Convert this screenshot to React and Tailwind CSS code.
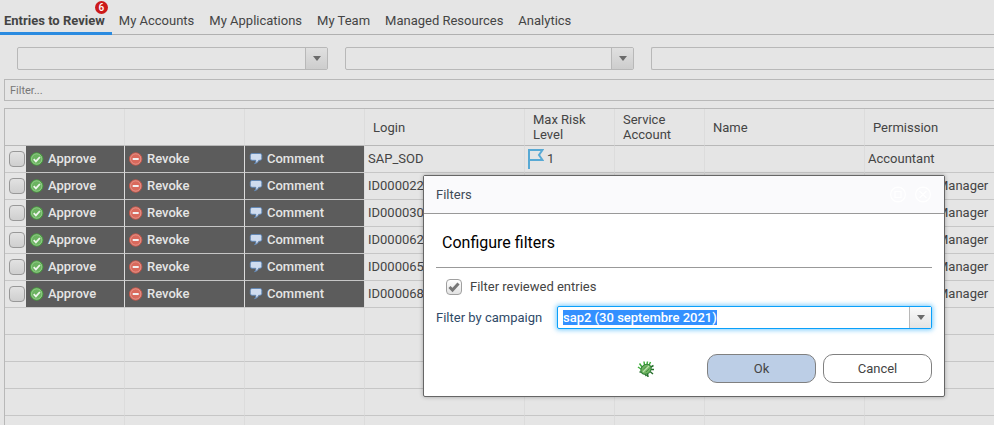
import { useEffect, useRef } from "react";

const tabs = ["My Accounts", "My Applications", "My Team", "Managed Resources", "Analytics"];

const entries = [
  { login: "SAP_SOD", risk: "1", permission: "Accountant" },
  { login: "ID000022", permission: "Accounting Manager" },
  { login: "ID000030", permission: "Accounting Manager" },
  { login: "ID000062", permission: "Accounting Manager" },
  { login: "ID000065", permission: "Accounting Manager" },
  { login: "ID000068", permission: "Accounting Manager" },
];

const columns = ["approve", "revoke", "comment", "login", "risk", "service", "name", "permission"];
const emptyRows = [0, 1, 2, 3, 4];

function ApproveIcon() {
  return (
    <svg className="size-3.5 shrink-0" viewBox="0 0 14 14" aria-hidden="true">
      <circle cx="6.700" cy="7" r="6.200" fill="#6bb360" stroke="#459a3c" />
      <circle cx="6.700" cy="7" r="5.200" fill="none" stroke="#a4d49c" strokeWidth=".7" />
      <path d="M3.700 7.200l2.200 2.200L9.900 5" fill="none" stroke="#eef5ec" strokeWidth="1.800" />
    </svg>
  );
}

function RevokeIcon() {
  return (
    <svg className="size-3.5 shrink-0" viewBox="0 0 14 14" aria-hidden="true">
      <circle cx="6.700" cy="7" r="6.200" fill="#d9695c" stroke="#c2574b" />
      <circle cx="6.700" cy="7" r="5.200" fill="none" stroke="#e9a79f" strokeWidth=".7" />
      <path d="M3.700 7h6" stroke="#f2eeee" strokeWidth="2" />
    </svg>
  );
}

function CommentIcon() {
  return (
    <svg className="size-3.5 shrink-0" viewBox="0 0 14 14" aria-hidden="true">
      <path
        d="M3 1.500h8q1.800 0 1.800 1.800v3.200q0 1.800-1.800 1.800h-1.300Q9 11 5.500 11.800Q7.300 10.500 6.800 8.300H3Q1.300 8.300 1.300 6.500V3.300Q1.300 1.500 3 1.500z"
        fill="#cfdcef"
        stroke="#5f86b5"
        strokeWidth=".9"
      />
    </svg>
  );
}

function FlagIcon() {
  return (
    <svg className="h-5 w-4 shrink-0" viewBox="0 0 16 20" fill="none" stroke="#58a9d4" strokeWidth="2" aria-hidden="true">
      <path d="M1 20V1h13.500l-3.500 5 3.500 5H1" />
    </svg>
  );
}

function BugIcon() {
  return (
    <svg className="h-[18px] w-[18px]" viewBox="0 0 18 18" aria-hidden="true">
      <g fill="none" strokeWidth="1.500">
        <path d="M5 7L2.500 3.500M4 9L1 7M7.500 5L7 1.500M10 4.500L10.500 1.500M12 5.500L13.500 2" stroke="#3fae3c" />
        <path d="M13 7.500L16.500 5.500M14 9.500L17 9.500M13 11.500L16 14M10.500 13.500L11 17M8 14L9.500 16M4.500 12L2.500 12" stroke="#256e2b" />
      </g>
      <ellipse cx="9" cy="9.300" rx="5.600" ry="4.600" transform="rotate(-40 9 9.300)" fill="#71b562" stroke="#2e7d34" />
      <path d="M6 12l6-6" stroke="#b9dfaa" strokeWidth="1.200" />
      <path d="M6.200 9.500l3-3M9 12l3.500-3.500" stroke="#3f8d3e" strokeWidth=".8" />
    </svg>
  );
}

function Arrow() {
  return (
    <svg className="h-[5px] w-2" viewBox="0 0 8 5" aria-hidden="true">
      <path d="M0 0h8L4 5z" fill="#6b6b6b" />
    </svg>
  );
}

function ToolbarSelect({ label, className }) {
  return (
    <div className={"relative h-[23px] overflow-hidden rounded-xs border border-[#b8b8b8] " + className}>
      <select aria-label={label} className="h-full w-full appearance-none bg-transparent px-1 outline-none">
        <option></option>
      </select>
      <span className="pointer-events-none absolute inset-y-0 right-0 flex w-[22px] items-center justify-center border-l border-[#b8b8b8] bg-linear-to-b from-[#e0e0e0] to-[#cdcdcd]">
        <Arrow />
      </span>
    </div>
  );
}

function ActionCell({ icon, label, login, withCheck }) {
  return (
    <td className="border-r border-b border-r-[#dcdcdc] border-b-[#c6c6c6] p-0">
      <div className="flex h-[26px]">
        {withCheck && (
          <label className="flex w-[21px] shrink-0 items-center pl-1">
            <input
              type="checkbox"
              aria-label={"Select " + login}
              className="size-4 appearance-none rounded-sm border border-[#989898] bg-linear-to-b from-[#e2e2e2] to-[#cfcfcf]"
            />
          </label>
        )}
        <button type="button" className="flex flex-1 items-center gap-1 bg-[#5c5c5c] px-1 font-medium text-[#e5e5e5]">
          {icon}
          {label}
        </button>
      </div>
    </td>
  );
}

const cell = "border-r border-b border-r-[#dcdcdc] border-b-[#c6c6c6] px-[3px] py-0 last:border-r-0";
const head = "border-r border-b border-r-[#dcdcdc] border-b-[#b8b8b8] px-2 py-0 text-left font-normal last:border-r-0";

function EntriesTable() {
  return (
    <table className="w-full table-fixed border-separate border-spacing-0 border-t border-l border-[#b8b8b8]">
      <colgroup>
        <col className="w-[120px]" />
        <col className="w-[120px]" />
        <col className="w-[120px]" />
        <col className="w-[160px]" />
        <col className="w-[90px]" />
        <col className="w-[90px]" />
        <col className="w-[160px]" />
        <col />
      </colgroup>
      <thead>
        <tr className="h-[37px] leading-[15px]">
          <th className={head}></th>
          <th className={head}></th>
          <th className={head}></th>
          <th className={head}>Login</th>
          <th className={head}>Max Risk Level</th>
          <th className={head}>Service Account</th>
          <th className={head}>Name</th>
          <th className={head}>Permission</th>
        </tr>
      </thead>
      <tbody>
        {entries.map((e) => (
          <tr key={e.login} className="h-[27px]">
            <ActionCell icon={<ApproveIcon />} label="Approve" login={e.login} withCheck />
            <ActionCell icon={<RevokeIcon />} label="Revoke" />
            <ActionCell icon={<CommentIcon />} label="Comment" />
            <td className={cell}>{e.login}</td>
            <td className={cell}>
              {e.risk && (
                <span className="flex items-center gap-[3px]">
                  <FlagIcon />
                  {e.risk}
                </span>
              )}
            </td>
            <td className={cell}></td>
            <td className={cell}></td>
            <td className={cell + " whitespace-nowrap"}>{e.permission}</td>
          </tr>
        ))}
        {emptyRows.map((r) => (
          <tr key={r} className="h-[27px]">
            {columns.map((c) => (
              <td key={c} className={cell}></td>
            ))}
          </tr>
        ))}
      </tbody>
    </table>
  );
}

function FiltersDialog() {
  const campaign = useRef(null);
  useEffect(() => {
    campaign.current.focus();
    campaign.current.select();
  }, []);

  return (
    <div
      role="dialog"
      aria-labelledby="filters-title"
      className="absolute top-[175px] left-[423px] w-[522px] rounded-xs border border-[#666] bg-white shadow-[0_0_4px_rgba(0,0,0,0.3)]"
    >
      <div className="flex h-[38px] items-center justify-between border-b border-[#999] bg-[#fafafc] px-3">
        <h2 id="filters-title" className="text-[#414b57]">Filters</h2>
        <div className="flex gap-2">
          <button type="button" aria-label="Maximize">
            <svg className="size-[17px]" viewBox="0 0 17 17" fill="none" stroke="#fff" strokeWidth="1.200">
              <circle cx="8" cy="8.500" r="7.400" />
              <rect x="5" y="5.500" width="6" height="6" />
            </svg>
          </button>
          <button type="button" aria-label="Close">
            <svg className="size-[17px]" viewBox="0 0 17 17" fill="none" stroke="#fff" strokeWidth="1.200">
              <circle cx="8" cy="8.500" r="7.400" />
              <path d="M4.500 5l7 7M11.500 5l-7 7" />
            </svg>
          </button>
        </div>
      </div>
      <form className="px-3 pb-[13px]">
        <h3 className="flex h-[54px] items-center border-b border-[#999] px-1.5 pt-1 text-base text-black">
          Configure filters
        </h3>
        <label className="flex h-[38px] items-center gap-2 pl-2.5">
          <span className="relative flex size-4">
            <input
              type="checkbox"
              defaultChecked
              className="size-4 appearance-none rounded-sm border border-[#a0a0a0] bg-linear-to-b from-white to-[#e2e2e2]"
            />
            <svg className="pointer-events-none absolute inset-0 size-4" viewBox="0 0 16 16" aria-hidden="true">
              <path d="M3.500 8l3 3 6-6.500" fill="none" stroke="#777" strokeWidth="3" />
            </svg>
          </span>
          Filter reviewed entries
        </label>
        <div className="flex items-center">
          <label htmlFor="campaign" className="w-[121px] shrink-0 text-[#2f4a68]">
            Filter by campaign
          </label>
          <div className="flex h-[23px] flex-1 rounded-xs border border-[#0aa0fa] bg-white shadow-[0_0_5px_1px_rgba(10,160,250,0.55)]">
            <input
              id="campaign"
              ref={campaign}
              type="text"
              defaultValue="sap2 (30 septembre 2021)"
              className="min-w-0 flex-1 bg-transparent px-[5px] leading-[15px] font-medium outline-none selection:bg-[#3390ff] selection:text-white"
            />
            <button
              type="button"
              aria-label="Show campaigns"
              className="flex w-[22px] items-center justify-center border-l border-[#b8b8b8] bg-linear-to-b from-[#fafafa] to-[#e4e4e4]"
            >
              <Arrow />
            </button>
          </div>
        </div>
        <div className="flex items-center justify-end gap-[7px] pt-[25px]">
          <button type="button" aria-label="Debug" className="mr-[45px]">
            <BugIcon />
          </button>
          <button type="button" className="h-[29px] w-[109px] rounded-[10px] border border-[#808080] bg-[#bccee6]">
            Ok
          </button>
          <button type="button" className="h-[29px] w-[109px] rounded-[10px] border border-[#808080] bg-white">
            Cancel
          </button>
        </div>
      </form>
    </div>
  );
}

export default function App() {
  return (
    <div className="relative h-screen overflow-hidden bg-[#e5e5e5] font-[Roboto,sans-serif] text-[13px] leading-4 text-[#444]">
      <nav className="flex h-[35px] items-stretch border-b border-[#b0b0b0]">
        <a href="#review" className="relative -mb-px border-b-3 border-[#2a8be0] pt-[13px] pr-[7px] pl-1 font-bold">
          Entries to Review
          <span className="absolute top-px right-1 flex size-[13px] items-center justify-center rounded-full bg-[#cc1a1a] text-[10px] font-medium text-white">
            6
          </span>
        </a>
        {tabs.map((t) => (
          <a key={t} href={"#" + t} className="pt-[13px] pr-2 pl-[7px]">
            {t}
          </a>
        ))}
      </nav>
      <div className="flex gap-[17px] pt-3 pl-[17px]">
        <ToolbarSelect label="First filter" className="w-[311px] shrink-0" />
        <ToolbarSelect label="Second filter" className="w-[289px] shrink-0" />
        <input
          type="text"
          aria-label="Search"
          className="h-[23px] min-w-0 flex-1 rounded-l-xs border border-r-0 border-[#b8b8b8] bg-transparent px-1 outline-none"
        />
      </div>
      <div className="pt-[9px] pb-[7px] pl-1">
        <input
          type="text"
          aria-label="Filter"
          placeholder="Filter..."
          className="block h-[22px] w-full border border-r-0 border-[#b8b8b8] bg-transparent px-[5px] text-[11px] outline-none placeholder:text-[#777]"
        />
      </div>
      <div className="pl-1">
        <EntriesTable />
      </div>
      <FiltersDialog />
    </div>
  );
}
